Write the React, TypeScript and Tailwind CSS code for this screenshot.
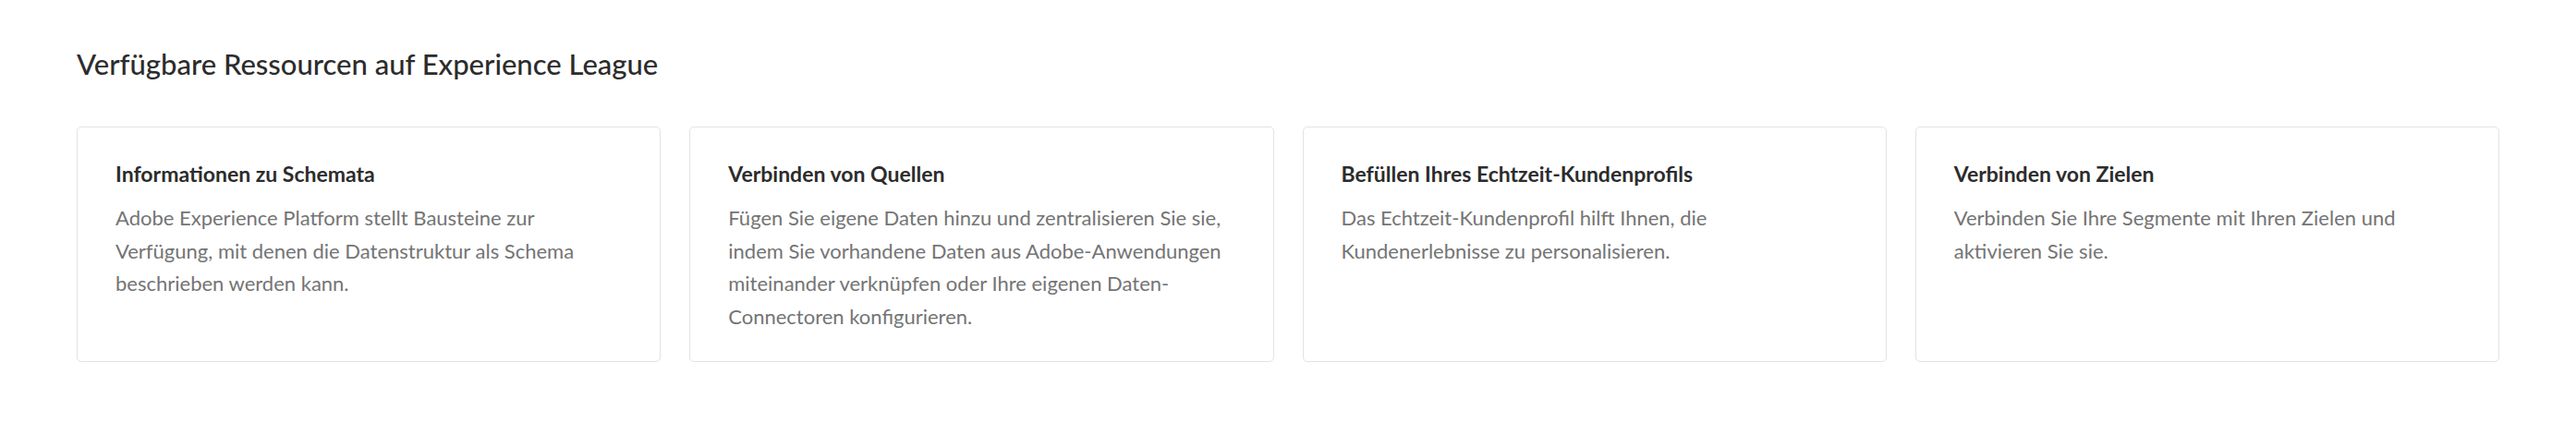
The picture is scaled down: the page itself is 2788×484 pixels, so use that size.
const resources = [
  {
    title: "Informationen zu Schemata",
    lines: [
      "Adobe Experience Platform stellt Bausteine zur",
      "Verfügung, mit denen die Datenstruktur als Schema",
      "beschrieben werden kann.",
    ],
  },
  {
    title: "Verbinden von Quellen",
    lines: [
      "Fügen Sie eigene Daten hinzu und zentralisieren Sie sie,",
      "indem Sie vorhandene Daten aus Adobe-Anwendungen",
      "miteinander verknüpfen oder Ihre eigenen Daten-",
      "Connectoren konfigurieren.",
    ],
  },
  {
    title: "Befüllen Ihres Echtzeit-Kundenprofils",
    lines: [
      "Das Echtzeit-Kundenprofil hilft Ihnen, die",
      "Kundenerlebnisse zu personalisieren.",
    ],
  },
  {
    title: "Verbinden von Zielen",
    lines: [
      "Verbinden Sie Ihre Segmente mit Ihren Zielen und",
      "aktivieren Sie sie.",
    ],
  },
];

const App = () => {
  return (
    <div className="min-h-screen bg-white px-[83px] pt-[48px] font-['Lato','Liberation_Sans',sans-serif]">
      <h2 className="text-[31px] leading-[42px] font-medium text-[#2c2c2c]">
        Verfügbare Ressourcen auf Experience League
      </h2>
      <div className="mt-[47px] grid grid-cols-4 gap-[31px]">
        {resources.map((r) => (
          <div
            key={r.title}
            className="h-[255px] rounded-[5px] border border-[#e3e3e3] px-[41px] pt-[35px]"
          >
            <div className="text-[23px] leading-[30px] font-bold text-[#2c2c2c]">
              {r.title}
            </div>
            <div className="mt-[15px] text-[22px] leading-[35.5px] font-normal text-[#747474] whitespace-nowrap">
              {r.lines.map((l) => (
                <div key={l}>{l}</div>
              ))}
            </div>
          </div>
        ))}
      </div>
    </div>
  );
};

export default App;
